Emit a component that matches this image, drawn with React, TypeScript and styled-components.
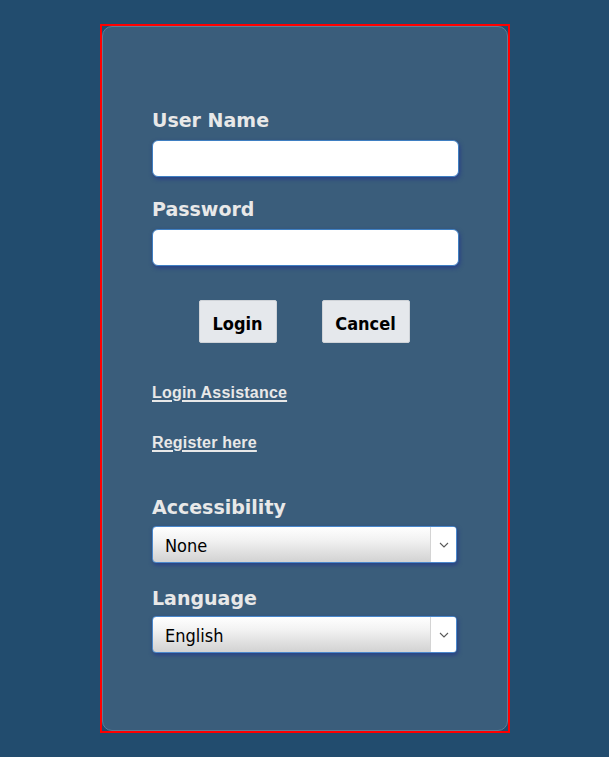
import React from "react";
import styled, { createGlobalStyle } from "styled-components";

const Global = createGlobalStyle`
  html, body { margin: 0; padding: 0; background: #224c6e; }
  body { font-family: "DejaVu Sans", Verdana, sans-serif; }
`;

const Page = styled.div`
  padding: 24px 0 0 100px;
  height: 757px;
  box-sizing: border-box;
`;

const Frame = styled.div`
  width: 410px;
  height: 709px;
  box-sizing: border-box;
  border: 2px solid #ff0000;
  background: #224c6e;
`;

const Panel = styled.form`
  height: 100%;
  box-sizing: border-box;
  background: #3a5d7b;
  border: 1px solid #5d7d98;
  border-radius: 10px;
  padding: 82px 49px 0 49px;
  display: flex;
  flex-direction: column;
`;

const Label = styled.label<{ $top?: number }>`
  display: block;
  margin-top: ${(p) => p.$top ?? 0}px;
  font-family: "DejaVu Sans", Verdana, sans-serif;
  font-weight: bold;
  font-size: 19px;
  line-height: 22px;
  color: #e8e8e8;
`;

const TextInput = styled.input`
  display: block;
  margin-top: 9px;
  width: 307px;
  height: 37px;
  box-sizing: border-box;
  border: 1px solid #3f7fc2;
  border-radius: 6px;
  background: #ffffff;
  box-shadow: 1px 2px 4px rgba(32, 52, 140, 0.75);
  outline: none;
  padding: 0 8px;
  font-size: 16px;
`;

const ButtonRow = styled.div`
  display: flex;
  justify-content: center;
  gap: 45px;
  margin-top: 34px;
  padding-right: 2px;
`;

const Button = styled.button<{ $w: number }>`
  width: ${(p) => p.$w}px;
  height: 43px;
  box-sizing: border-box;
  background: #e5e8ec;
  border: 1px solid #cfd3d8;
  border-radius: 2px;
  font-family: "DejaVu Sans Condensed", "DejaVu Sans", sans-serif;
  font-stretch: condensed;
  font-weight: bold;
  font-size: 18px;
  color: #000;
  padding: 3px 0 0 0;
  cursor: pointer;
`;

const LinkLine = styled.div<{ $top: number }>`
  margin-top: ${(p) => p.$top}px;
  line-height: 18px;
`;

const Link = styled.a`
  font-family: "Liberation Sans", Arial, sans-serif;
  font-weight: bold;
  font-size: 16px;
  letter-spacing: 0.2px;
  color: #e8e8e8;
  text-decoration: underline;
  text-decoration-thickness: 2px;
  text-underline-offset: 2px;
`;

const SelectBox = styled.div<{ $top: number }>`
  display: flex;
  margin-top: ${(p) => p.$top}px;
  width: 305px;
  height: 37px;
  box-sizing: border-box;
  border: 1px solid #4a88cc;
  border-radius: 4px;
  overflow: hidden;
  background: linear-gradient(#ffffff 0%, #f3f3f3 35%, #d2d2d2 100%);
  box-shadow: 1px 2px 4px rgba(32, 52, 140, 0.75);
`;

const NativeSelect = styled.select`
  flex: 1;
  appearance: none;
  -webkit-appearance: none;
  border: none;
  background: transparent;
  outline: none;
  padding: 1px 0 0 12px;
  margin: 0;
  font-family: "DejaVu Sans Condensed", "DejaVu Sans", sans-serif;
  font-stretch: condensed;
  font-size: 18px;
  color: #000;
`;

const ArrowCell = styled.div`
  width: 25px;
  flex: none;
  background: #ffffff;
  border-left: 1px solid #d4d4d4;
  display: flex;
  align-items: center;
  justify-content: center;
`;

const Chevron = () => (
  <svg width="10" height="6" viewBox="0 0 10 6">
    <path d="M1 1 L5 5 L9 1" fill="none" stroke="#5a5a5a" strokeWidth="1.1" />
  </svg>
);

export default function App() {
  return (
    <>
      <Global />
      <Page>
        <Frame>
          <Panel onSubmit={(e) => e.preventDefault()}>
            <Label htmlFor="user">User Name</Label>
            <TextInput id="user" type="text" />
            <Label htmlFor="pass" $top={21}>Password</Label>
            <TextInput id="pass" type="password" />
            <ButtonRow>
              <Button $w={78} type="submit">Login</Button>
              <Button $w={88} type="button">Cancel</Button>
            </ButtonRow>
            <LinkLine $top={41}>
              <Link href="#">Login Assistance</Link>
            </LinkLine>
            <LinkLine $top={32}>
              <Link href="#">Register here</Link>
            </LinkLine>
            <Label htmlFor="acc" $top={44}>Accessibility</Label>
            <SelectBox $top={8}>
              <NativeSelect id="acc" defaultValue="None">
                <option>None</option>
              </NativeSelect>
              <ArrowCell>
                <Chevron />
              </ArrowCell>
            </SelectBox>
            <Label htmlFor="lang" $top={24}>Language</Label>
            <SelectBox $top={7}>
              <NativeSelect id="lang" defaultValue="English">
                <option>English</option>
              </NativeSelect>
              <ArrowCell>
                <Chevron />
              </ArrowCell>
            </SelectBox>
          </Panel>
        </Frame>
      </Page>
    </>
  );
}
